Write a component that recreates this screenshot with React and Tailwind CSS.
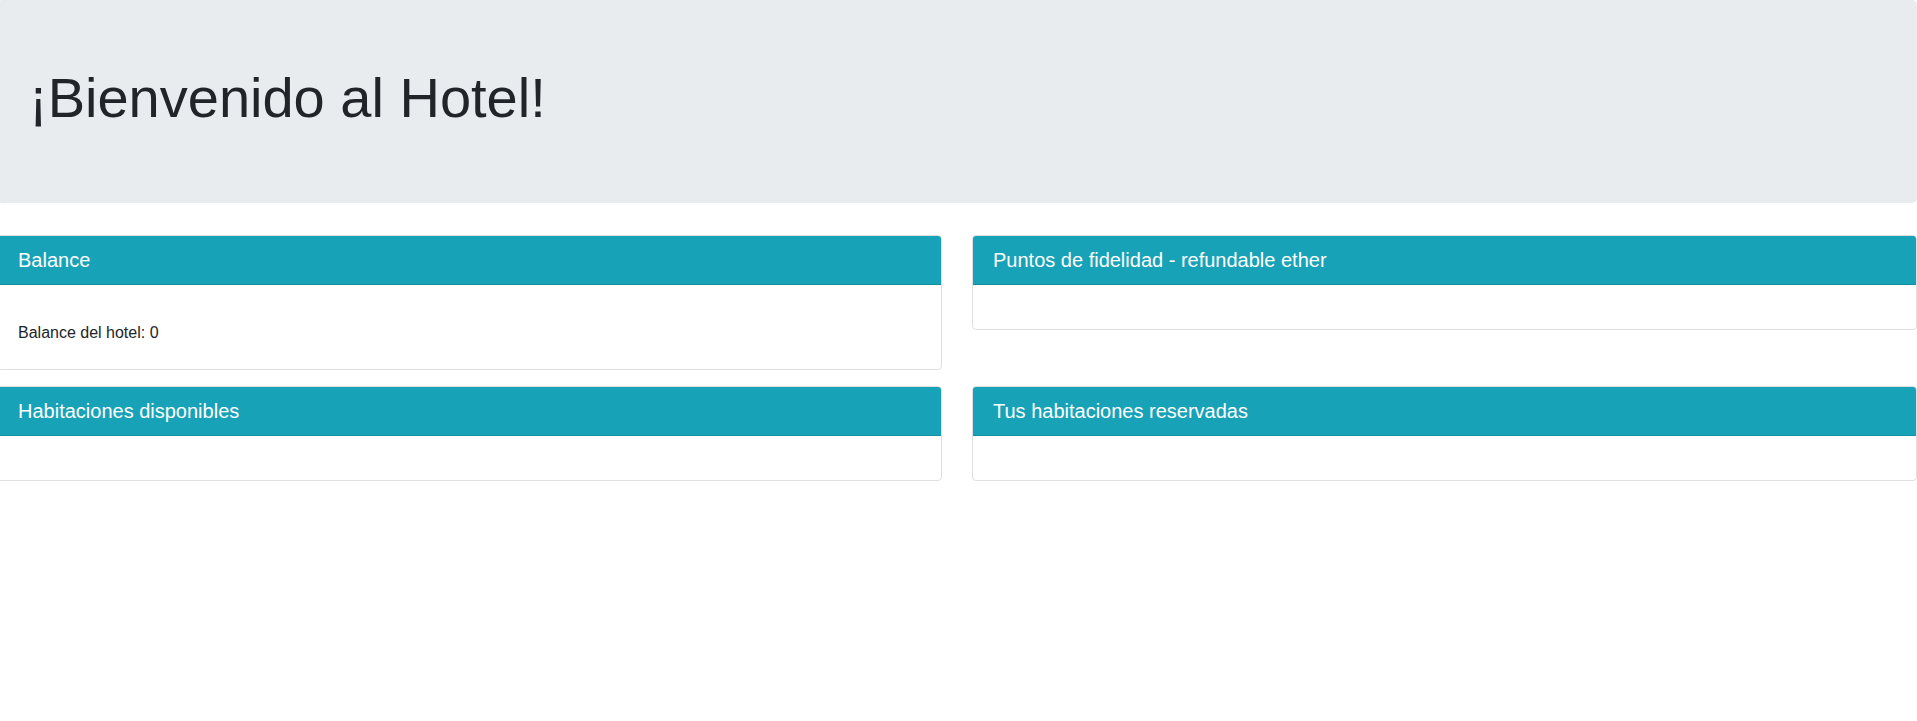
export default function App() {
  const cards = [
    [
      { title: "Balance", body: "Balance del hotel: 0" },
      { title: "Puntos de fidelidad - refundable ether" },
    ],
    [
      { title: "Habitaciones disponibles" },
      { title: "Tus habitaciones reservadas" },
    ],
  ];

  return (
    <div className="min-h-[721px] bg-white font-['Liberation_Sans',Arial,sans-serif] text-[#212529]">
      <div className="ml-[-3px] w-[1920px]">
        {/* ── JUMBOTRON ── */}
        <div className="mb-8 rounded-[5px] bg-[#e9ecef] px-8 py-16">
          <h1 className="mb-2 text-[56px] font-normal leading-[1.2]">¡Bienvenido al Hotel!</h1>
        </div>

        {/* ── CARDS ── */}
        {cards.map((row, i) => (
          <div key={i} className="mb-4 grid grid-cols-2 items-start gap-x-[30px]">
            {row.map((c) => (
              <div key={c.title} className="overflow-hidden rounded border border-[#dfdfdf] bg-white">
                <div className="border-b border-[#148ea1] bg-[#17a2b8] px-5 py-3">
                  <h5 className="text-[20px] font-normal leading-6 text-white">{c.title}</h5>
                </div>
                {c.body ? (
                  <div className="px-5 pb-6 pt-9">
                    <p className="text-base leading-6">{c.body}</p>
                  </div>
                ) : (
                  <div className="h-11 px-5" />
                )}
              </div>
            ))}
          </div>
        ))}
      </div>
    </div>
  );
}
